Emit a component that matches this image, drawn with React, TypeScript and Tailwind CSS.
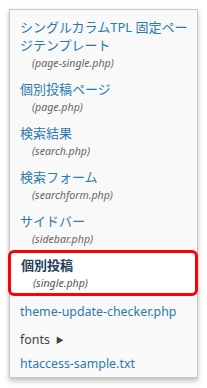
const files = [
  { label: 'シングルカラムTPL 固定ページテンプレート', file: 'page-single.php' },
  { label: '個別投稿ページ', file: 'page.php' },
  { label: '検索結果', file: 'search.php' },
  { label: '検索フォーム', file: 'searchform.php' },
  { label: 'サイドバー', file: 'sidebar.php' },
];

const font = { fontFamily: '"Noto Sans", "Noto Sans CJK JP", sans-serif' };

export default function App() {
  return (
    <div className="w-[207px] h-[388px] bg-white pl-[9px] pt-[9px]" style={font}>
      <div className="w-[189px] h-[369px] border border-[#c6c6c6] bg-[#f9f9f9] shadow-[0_3px_5px_rgba(0,0,0,0.25)]">
        <ul className="pt-[4px]">
          {files.map((f) => (
            <li key={f.file} className="py-1 pl-[10px] pr-[6px]">
              <div className="text-[13px] leading-[18px] text-[#2a7ab0]">{f.label}</div>
              <div className="pl-[12px] text-[10.6px] leading-[18px] italic text-[#666]">({f.file})</div>
            </li>
          ))}
          <li className="relative bg-white py-1 pl-[10px] pr-[6px] border-l border-[#d6e8f2]">
            <div className="text-[13px] leading-[18px] font-bold text-[#23405a]">個別投稿</div>
            <div className="pl-[12px] text-[10.6px] leading-[18px] italic text-[#555]">(single.php)</div>
            <span className="absolute -top-[2px] -bottom-0 -left-[3px] -right-[1px] rounded-[6px] border-[3px] border-[#f00]" />
          </li>
          <li className="pt-[7px] pb-[3px] pl-[10px] text-[12.4px] leading-[18px] text-[#2a7ab0]">
            theme-update-checker.php
          </li>
          <li className="pt-[7px] pb-[3px] pl-[10px] text-[12.4px] leading-[18px] text-[#3c434a] flex items-center gap-[6px]">
            fonts
            <span className="text-[8px] text-[#3c434a]">▶</span>
          </li>
          <li className="pt-[3px] pl-[10px] text-[12.4px] leading-[18px] text-[#2a7ab0]">
            htaccess-sample.txt
          </li>
        </ul>
      </div>
    </div>
  );
}
